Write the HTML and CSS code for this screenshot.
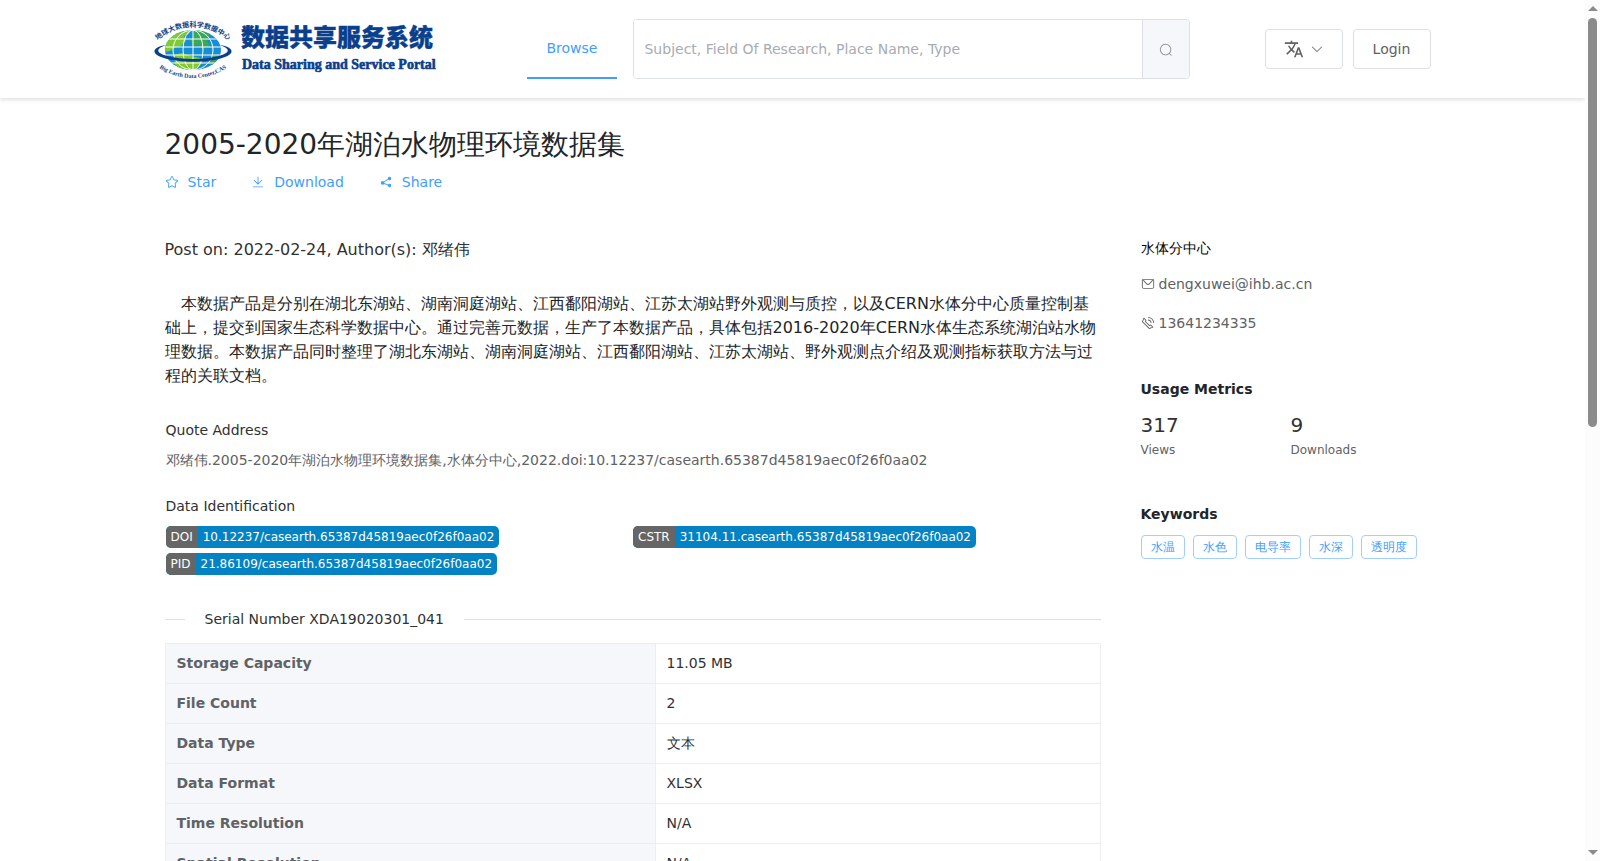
FILE: index.html
```html
<!DOCTYPE html>
<html lang="en">
<head>
    <meta charset="UTF-8">
    <meta name="viewport" content="width=device-width, initial-scale=1.0">
    <title>2005-2020年湖泊水物理环境数据集</title>
    <link rel="stylesheet" href="styles.css">
</head>
<body>
    <div class="page">
        <header class="header">
            <div class="container header-row">
                <a href="#" class="logo">
                    <svg width="290" height="66" viewBox="0 0 290 66">
                        <defs>
                            <path id="arcTop" d="M3 26A53 53 0 0 1 77 26"/>
                            <path id="arcBottom" d="M5 51A61 61 0 0 0 75 51"/>
                            <clipPath id="ball"><ellipse cx="40" cy="34" rx="28" ry="20"/></clipPath>
                        </defs>
                        <ellipse cx="40" cy="34" rx="28" ry="20" fill="#148fd4"/>
                        <g clip-path="url(#ball)">
                            <path d="M12 13H35L37 17 31 20 33 25 28 30 23 31 17 35 12 36Z" fill="#7fc931"/>
                            <path d="M41 13L52 15 57 19 54 25 57 30 50 33 45 29 40 30 37 24 41 20Z" fill="#38a85a"/>
                            <path d="M20 39L29 37 38 40 47 42 50 46 45 51 39 55H28L22 48Z" fill="#7fc931"/>
                            <path d="M60 40L67 38V44L60 49L56 46Z" fill="#38a85a"/>
                            <g fill="none" stroke="#fff" stroke-width="1">
                                <path d="M40 14V54M12 23H68M12 31H68M12 39H68M12 47H68"/>
                                <ellipse cx="40" cy="34" rx="10" ry="20"/>
                                <ellipse cx="40" cy="34" rx="20" ry="20"/>
                            </g>
                        </g>
                        <path d="M13 29C-1 31-3 38 11 42C27 47 53 47 69 42C83 38 81 31 67 29C78 33 77 37 66 40C50 44 30 44 14 40C3 37 2 33 13 29Z" fill="#0a3f8c"/>
                        <text class="logo-ring"><textPath href="#arcTop" startOffset="50%">地球大数据科学数据中心</textPath></text>
                        <text class="logo-ring-en"><textPath href="#arcBottom" startOffset="50%">Big Earth Data Center,CAS</textPath></text>
                        <text class="logo-cn" x="88" y="30">数据共享服务系统</text>
                        <text class="logo-en" x="89" y="53">Data Sharing and Service Portal</text>
                    </svg>
                </a>
                <nav class="nav"><a href="#" class="active">Browse</a></nav>
                <form class="search">
                    <input type="text" aria-label="Search" placeholder="Subject, Field Of Research, Place Name, Type">
                    <button type="button" aria-label="Search">
                        <svg class="icon" viewBox="0 0 1024 1024"><path d="m795.904 750.720 124.992 124.928a32 32 0 0 1-45.248 45.248L750.656 795.904a416 416 0 1 1 45.248-45.248zM480 832a352 352 0 1 0 0-704 352 352 0 0 0 0 704z"/></svg>
                    </button>
                </form>
                <div class="header-actions">
                    <button type="button" class="btn" aria-label="Language">
                        <svg class="translate" viewBox="0 0 24 24"><path d="M12.870 15.070l-2.540-2.510.030-.030c1.740-1.940 2.980-4.170 3.710-6.530H17V4h-7V2H8v2H1v1.990h11.170C11.500 7.920 10.440 9.750 9 11.350 8.070 10.320 7.300 9.190 6.690 8h-2c.730 1.630 1.730 3.170 2.980 4.560l-5.090 5.020L4 19l5-5 3.110 3.110.760-2.040zM18.500 10h-2L12 22h2l1.120-3h4.750L21 22h2l-4.500-12zm-2.620 7l1.620-4.330L19.120 17h-3.240z"/></svg>
                        <svg class="icon" viewBox="0 0 1024 1024"><path d="M831.872 340.864 512 652.672 192.128 340.864a30.592 30.592 0 0 0-42.752 0 29.120 29.120 0 0 0 0 41.600L489.664 714.240a32 32 0 0 0 44.672 0l340.288-331.712a29.120 29.120 0 0 0 0-41.728 30.592 30.592 0 0 0-42.752 0z"/></svg>
                    </button>
                    <button type="button" class="btn">Login</button>
                </div>
            </div>
        </header>

        <div class="container content">
            <main class="main">
                <h1>2005-2020年湖泊水物理环境数据集</h1>
                <div class="links">
                    <a href="#">
                        <svg class="icon" viewBox="0 0 1024 1024"><path d="m512 747.840 228.160 119.936a6.400 6.400 0 0 0 9.280-6.720l-43.520-254.080 184.512-179.904a6.400 6.400 0 0 0-3.520-10.880l-255.104-37.120L517.760 147.904a6.400 6.400 0 0 0-11.520 0L392.192 379.072l-255.104 37.120a6.400 6.400 0 0 0-3.520 10.880L318.080 606.976l-43.584 254.080a6.400 6.400 0 0 0 9.280 6.720L512 747.840zM313.600 924.480a70.400 70.400 0 0 1-102.144-74.240l37.888-220.928L88.960 472.960A70.400 70.400 0 0 1 128 352.896l221.760-32.256 99.200-200.960a70.400 70.400 0 0 1 126.208 0l99.200 200.960 221.824 32.256a70.400 70.400 0 0 1 39.040 120.064L774.720 629.376l37.888 220.928a70.400 70.400 0 0 1-102.144 74.240L512 820.096l-198.400 104.320z"/></svg>
                        Star
                    </a>
                    <a href="#">
                        <svg class="icon" viewBox="0 0 1024 1024"><path d="M160 832h704a32 32 0 1 1 0 64H160a32 32 0 1 1 0-64zm384-253.696 236.288-236.352 45.248 45.248L508.800 704 192 387.200l45.248-45.248L480 584.704V128h64v450.304z"/></svg>
                        Download
                    </a>
                    <a href="#">
                        <svg class="icon" viewBox="0 0 1024 1024"><path d="m679.872 348.800-301.760 188.608a127.808 127.808 0 0 1 5.120 52.160l279.936 104.960a128 128 0 1 1-22.464 59.904l-279.872-104.960a128 128 0 1 1-16.640-166.272l301.696-188.608a128 128 0 1 1 33.920 54.272z"/></svg>
                        Share
                    </a>
                </div>

                <p class="post">Post on: 2022-02-24, Author(s): 邓绪伟</p>
                <p class="description">本数据产品是分别在湖北东湖站、湖南洞庭湖站、江西鄱阳湖站、江苏太湖站野外观测与质控，以及CERN水体分中心质量控制基础上，提交到国家生态科学数据中心。通过完善元数据，生产了本数据产品，具体包括2016-2020年CERN水体生态系统湖泊站水物理数据。本数据产品同时整理了湖北东湖站、湖南洞庭湖站、江西鄱阳湖站、江苏太湖站、野外观测点介绍及观测指标获取方法与过程的关联文档。</p>

                <section class="quote">
                    <h2>Quote Address</h2>
                    <p>邓绪伟.2005-2020年湖泊水物理环境数据集,水体分中心,2022.doi:10.12237/casearth.65387d45819aec0f26f0aa02</p>
                </section>

                <section class="ids">
                    <h2>Data Identification</h2>
                    <div class="badges">
                        <a href="#" class="badge"><span>DOI</span><b>10.12237/casearth.65387d45819aec0f26f0aa02</b></a>
                        <a href="#" class="badge"><span>CSTR</span><b>31104.11.casearth.65387d45819aec0f26f0aa02</b></a>
                        <a href="#" class="badge"><span>PID</span><b>21.86109/casearth.65387d45819aec0f26f0aa02</b></a>
                    </div>
                </section>

                <div class="divider">Serial Number XDA19020301_041</div>

                <table class="info">
                    <tbody>
                        <tr><th scope="row">Storage Capacity</th><td>11.05 MB</td></tr>
                        <tr><th scope="row">File Count</th><td>2</td></tr>
                        <tr><th scope="row">Data Type</th><td>文本</td></tr>
                        <tr><th scope="row">Data Format</th><td>XLSX</td></tr>
                        <tr><th scope="row">Time Resolution</th><td>N/A</td></tr>
                        <tr><th scope="row">Spatial Resolution</th><td>N/A</td></tr>
                    </tbody>
                </table>
            </main>

            <aside class="side">
                <p class="center-name">水体分中心</p>
                <p class="contact">
                    <svg class="icon" viewBox="0 0 1024 1024"><path d="M128 224v512a64 64 0 0 0 64 64h640a64 64 0 0 0 64-64V224H128zm0-64h768a64 64 0 0 1 64 64v512a128 128 0 0 1-128 128H192A128 128 0 0 1 64 736V224a64 64 0 0 1 64-64z"/><path d="M904 224 656.512 506.880a192 192 0 0 1-289.024 0L120 224h784zm-698.944 0 210.560 240.704a128 128 0 0 0 192.704 0L818.944 224H205.056z"/></svg>
                    dengxuwei@ihb.ac.cn
                </p>
                <p class="contact">
                    <svg class="icon" viewBox="0 0 1024 1024"><path d="M79.360 432.256 591.744 944.640a32 32 0 0 0 35.200 6.784l253.440-108.544a32 32 0 0 0 9.984-52.032l-153.856-153.920a32 32 0 0 0-36.928-6.016l-69.888 34.944L358.080 394.240l35.008-69.888a32 32 0 0 0-5.952-36.928L233.152 133.568a32 32 0 0 0-52.032 10.048L72.512 397.056a32 32 0 0 0 6.784 35.200zm60.480-29.952 81.536-190.080L325.568 316.480l-24.640 49.216-20.608 41.216 32.576 32.640 271.552 271.552 32.640 32.640 41.216-20.672 49.280-24.576 104.192 104.128-190.080 81.472L139.840 402.304zM512 320v-64a256 256 0 0 1 256 256h-64a192 192 0 0 0-192-192zm0-192V64a448 448 0 0 1 448 448h-64a384 384 0 0 0-384-384z"/></svg>
                    13641234335
                </p>

                <h3>Usage Metrics</h3>
                <div class="metrics">
                    <div><strong>317</strong><small>Views</small></div>
                    <div><strong>9</strong><small>Downloads</small></div>
                </div>

                <h3>Keywords</h3>
                <div class="tags">
                    <span>水温</span>
                    <span>水色</span>
                    <span>电导率</span>
                    <span>水深</span>
                    <span>透明度</span>
                </div>
            </aside>
        </div>
    </div>

    <div class="scrollbar">
        <i class="up"></i>
        <i class="thumb"></i>
        <i class="down"></i>
    </div>
</body>
</html>
```

FILE: styles.css
```css
* {
    margin: 0;
    padding: 0;
    box-sizing: border-box;
}

body {
    display: flex;
    height: 100vh;
    overflow: hidden;
    font-family: "DejaVu Sans", sans-serif;
    font-size: 14px;
    line-height: 20px;
    color: #212529;
    background: #fff;
}

a {
    text-decoration: none;
}

h1, h2 {
    font-weight: 400;
}

input, button {
    font-family: inherit;
    font-size: 14px;
}

.page {
    flex: 1;
    min-width: 0;
    overflow: hidden;
}

.container {
    max-width: 1280px;
    margin: 0 auto;
}

.icon {
    width: 14px;
    height: 14px;
    fill: currentColor;
    flex: none;
}

/* header */
.header {
    box-shadow: 0 2px 4px rgba(0, 0, 0, 0.12);
}

.header-row {
    display: flex;
    align-items: center;
    height: 98px;
    padding-right: 2px;
}

.logo {
    width: 374px;
    height: 66px;
}

.logo-cn {
    font: 900 24px "Noto Sans CJK SC", sans-serif;
    fill: #0a3f8c;
    stroke: #0a3f8c;
    stroke-width: 0.4px;
}

.logo-en {
    font: bold 14px "Liberation Serif", serif;
    fill: #0a3f8c;
    stroke: #0a3f8c;
    stroke-width: 0.6px;
}

.logo-ring {
    font: bold 7px "Noto Sans CJK SC", sans-serif;
    fill: #0a3f8c;
    text-anchor: middle;
}

.logo-ring-en {
    font: bold 6px "Liberation Serif", serif;
    fill: #0a3f8c;
    text-anchor: middle;
}

.nav a {
    display: block;
    height: 60px;
    margin-right: 16px;
    padding: 0 20px;
    line-height: 58px;
    border-bottom: 2px solid #409eff;
    color: #409eff;
}

.search {
    display: flex;
    flex: 1;
    height: 60px;
    border: 1px solid #dcdfe6;
    border-radius: 4px;
    overflow: hidden;
}

.search input {
    flex: 1;
    min-width: 0;
    padding: 0 10px;
    border: 0;
    outline: none;
    background: #fff;
}

.search input::placeholder {
    color: #a8abb2;
}

.search button {
    width: 47px;
    border: 0;
    border-left: 1px solid #dcdfe6;
    background: #f5f7fa;
    color: #909399;
}

.search .icon {
    vertical-align: middle;
}

.header-actions {
    display: flex;
    gap: 10px;
    margin-left: 75px;
}

.btn {
    display: flex;
    align-items: center;
    justify-content: center;
    gap: 6px;
    height: 40px;
    width: 78px;
    border: 1px solid #dcdfe6;
    border-radius: 4px;
    background: #fff;
    color: #606266;
}

.translate {
    width: 20px;
    height: 20px;
    fill: #606266;
}

/* content */
.content {
    display: grid;
    grid-template-columns: 3fr 1fr;
    padding-top: 30px;
}

.main {
    padding: 0 12px;
}

.main h1 {
    font-size: 28px;
    line-height: 34px;
}

.links {
    display: flex;
    gap: 35px;
    margin-top: 10px;
}

.links a {
    display: flex;
    align-items: center;
    gap: 9px;
    color: #409eff;
}

.post {
    margin-top: 46px;
    font-size: 16px;
    line-height: 24px;
    color: #303133;
}

.description {
    margin-top: 30px;
    font-size: 16px;
    line-height: 24px;
    text-indent: 1em;
}

.quote, .ids {
    padding-left: 1px;
}

.quote {
    margin-top: 32px;
}

.ids {
    margin-top: 26px;
}

.main h2 {
    font-size: 14px;
    line-height: 20px;
    color: #303133;
}

.quote p {
    margin-top: 10px;
    color: #606266;
}

.badges {
    display: grid;
    grid-template-columns: 1fr 1fr;
    justify-items: start;
    gap: 5px 0;
    margin-top: 10px;
}

.badge {
    display: flex;
    height: 22px;
    border-radius: 5px;
    overflow: hidden;
    font-size: 12px;
    line-height: 22px;
    color: #fff;
    background: #0383c3;
}

.badge span {
    padding: 0 5px;
    background: #666;
}

.badge b {
    padding: 0 5px;
    font-weight: 400;
}

.divider {
    display: flex;
    align-items: center;
    gap: 20px;
    margin: 34px 0 14px;
    color: #303133;
}

.divider::before, .divider::after {
    content: "";
    width: 20px;
    height: 1px;
    background: #dcdfe6;
}

.divider::after {
    flex: 1;
}

.info {
    width: 100%;
    table-layout: fixed;
    border-collapse: collapse;
}

.info th, .info td {
    height: 40px;
    padding: 0 11px 1px;
    border: 1px solid #ebeef5;
    text-align: left;
    color: #303133;
}

.info th {
    width: 490px;
    background: #f5f7fa;
    color: #606266;
}

/* right column */
.side {
    padding: 110px 0 0 28px;
}

.center-name {
    color: #000;
}

.contact {
    display: flex;
    align-items: center;
    gap: 4px;
    margin-top: 16px;
    color: #606266;
}

.contact + .contact {
    margin-top: 19px;
}

.side h3 {
    margin-top: 46px;
    font-size: 14px;
}

.metrics {
    display: grid;
    grid-template-columns: 150px 1fr;
    margin-top: 12px;
}

.metrics strong, .metrics small {
    display: block;
    font-weight: 400;
}

.metrics strong {
    font-size: 20px;
    line-height: 28px;
    color: #303133;
}

.metrics small {
    font-size: 12px;
    line-height: 22px;
    color: #606266;
}

.metrics + h3 {
    margin-top: 43px;
}

.tags {
    display: flex;
    flex-wrap: wrap;
    gap: 8px;
    margin-top: 11px;
}

.tags span {
    height: 24px;
    padding: 0 9px;
    border: 1px solid #a0cfff;
    border-radius: 4px;
    font-size: 12px;
    line-height: 22px;
    color: #409eff;
}

/* scrollbar */
.scrollbar {
    display: flex;
    flex-direction: column;
    align-items: center;
    width: 15px;
    padding: 6px 0;
    background: #fcfcfc;
}

.scrollbar .up, .scrollbar .down {
    border: 5px solid transparent;
    border-top-width: 0;
    border-bottom: 5px solid #8b8b8b;
}

.scrollbar .down {
    margin-top: auto;
    border-width: 5px 5px 0;
    border-color: #8b8b8b transparent transparent;
}

.scrollbar .thumb {
    width: 9px;
    height: 47.5vh;
    margin-top: 7px;
    border-radius: 5px;
    background: #8b8b8b;
}
```
